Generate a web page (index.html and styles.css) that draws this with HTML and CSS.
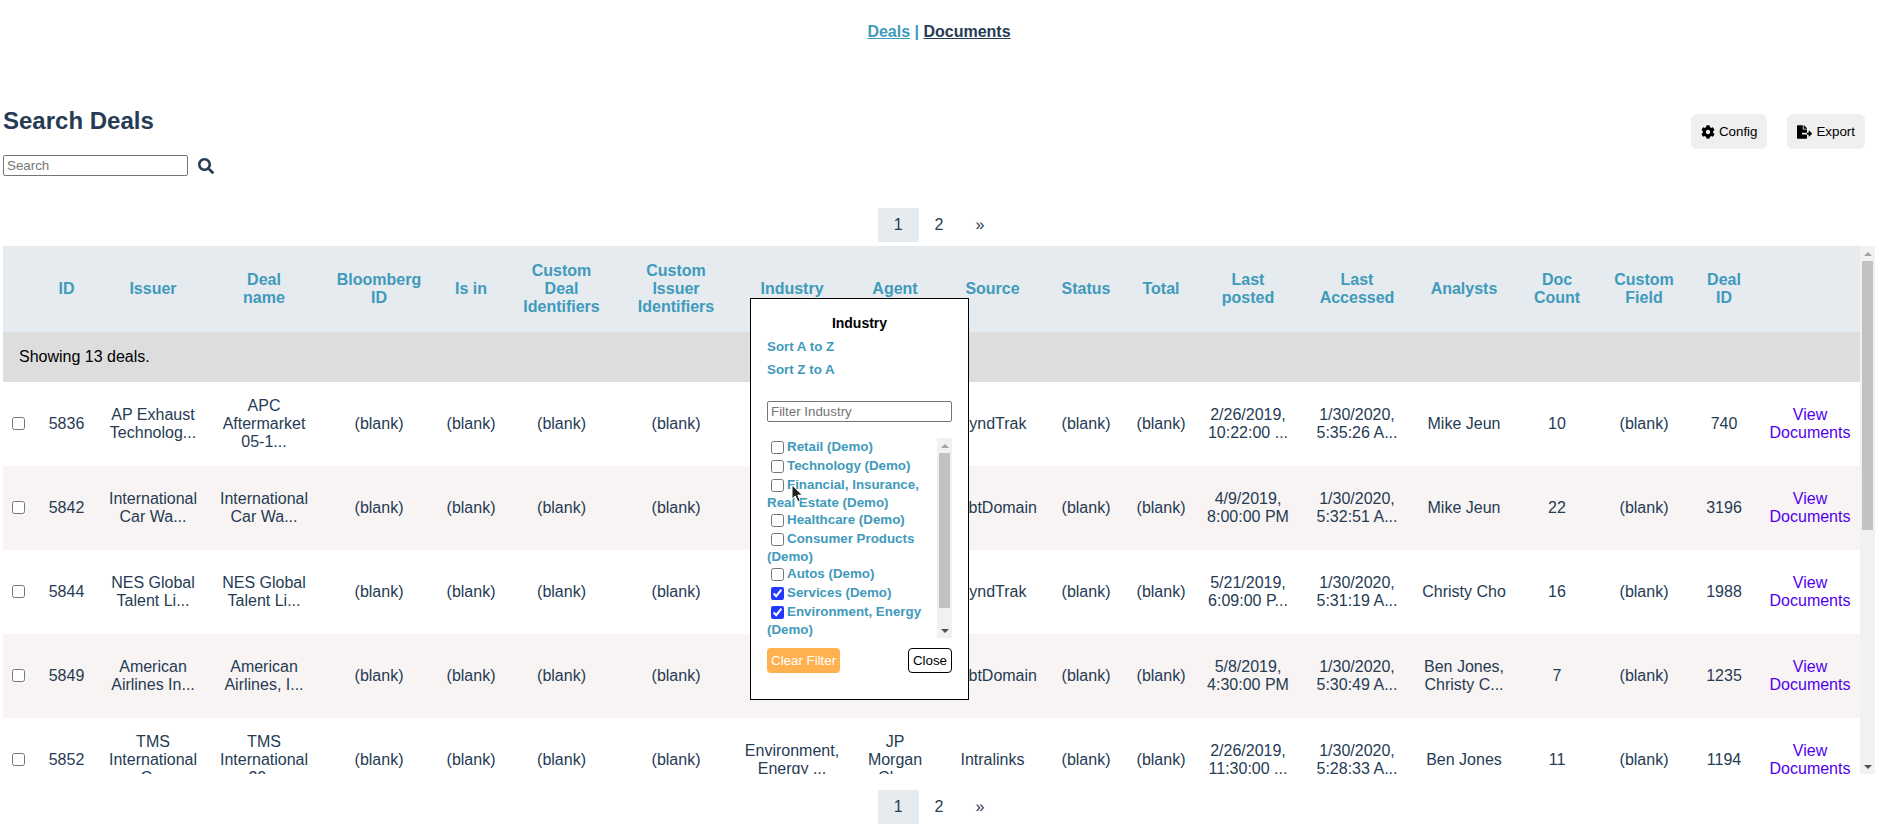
FILE: index.html
```html
<!DOCTYPE html>
<html lang="en">
<head>
<meta charset="utf-8">
<title>Search Deals</title>
<link rel="stylesheet" href="styles.css">
</head>
<body>
<nav class="top-nav"><a class="current" href="#deals">Deals</a> | <a href="#documents">Documents</a></nav>

<header class="page-head">
  <div class="search-area">
    <h1>Search Deals</h1>
    <form class="search-form">
      <input class="text-box" type="text" placeholder="Search" aria-label="Search deals">
      <button class="icon-button" type="button" aria-label="Run search"><svg width="16" height="16" viewBox="0 0 512 512" fill="currentColor"><path d="M505 442.700 405.300 343c-4.500-4.500-10.600-7-17-7H372c27.600-35.300 44-79.700 44-128C416 93.100 322.900 0 208 0S0 93.100 0 208s93.100 208 208 208c48.300 0 92.700-16.400 128-44v16.300c0 6.400 2.500 12.500 7 17l99.700 99.700c9.400 9.400 24.600 9.400 33.900 0l28.300-28.300c9.400-9.400 9.400-24.600.1-34zM208 336c-70.700 0-128-57.200-128-128 0-70.700 57.200-128 128-128 70.700 0 128 57.200 128 128 0 70.700-57.200 128-128 128z"/></svg></button>
    </form>
  </div>
  <div class="actions">
    <button class="action" type="button"><svg width="14" height="14" viewBox="0 0 512 512" fill="currentColor"><path d="M487.400 315.700l-42.600-24.600c4.300-23.200 4.300-47 0-70.200l42.600-24.600c4.900-2.800 7.100-8.600 5.500-14-11.100-35.600-30-67.800-54.700-94.600-3.800-4.100-10-5.100-14.800-2.300L380.800 110c-17.900-15.400-38.500-27.300-60.800-35.100V25.800c0-5.600-3.900-10.500-9.400-11.700-36.700-8.200-74.300-7.800-109.200 0-5.500 1.200-9.400 6.100-9.400 11.700V75c-22.200 7.900-42.800 19.800-60.800 35.100L88.700 85.500c-4.900-2.800-11-1.900-14.800 2.300-24.700 26.700-43.600 58.900-54.700 94.600-1.700 5.400.6 11.200 5.500 14L67.300 221c-4.300 23.200-4.300 47 0 70.200l-42.600 24.600c-4.900 2.800-7.100 8.600-5.500 14 11.100 35.600 30 67.800 54.700 94.600 3.800 4.100 10 5.100 14.800 2.300l42.600-24.600c17.900 15.400 38.500 27.300 60.800 35.100v49.200c0 5.600 3.900 10.500 9.400 11.700 36.700 8.200 74.300 7.800 109.200 0 5.500-1.200 9.400-6.100 9.400-11.700v-49.200c22.200-7.900 42.800-19.800 60.800-35.100l42.600 24.600c4.900 2.800 11 1.900 14.800-2.300 24.700-26.700 43.600-58.900 54.700-94.600 1.500-5.500-.7-11.300-5.600-14.100zM256 336c-44.100 0-80-35.900-80-80s35.900-80 80-80 80 35.900 80 80-35.900 80-80 80z"/></svg>Config</button>
    <button class="action" type="button"><svg width="15" height="14" viewBox="0 0 576 512" fill="currentColor"><path d="M384 121.900c0-6.300-2.500-12.400-7-16.900L279.100 7c-4.500-4.500-10.600-7-17-7H256v128h128zM571 308l-95.700-96.400c-10.100-10.100-27.400-3-27.400 11.300V288h-64v64h64v65.200c0 14.300 17.300 21.400 27.400 11.300L571 332c6.600-6.600 6.600-17.400 0-24zm-379 28v-32c0-8.800 7.200-16 16-16h176V160H248c-13.200 0-24-10.800-24-24V0H24C10.700 0 0 10.700 0 24v464c0 13.300 10.700 24 24 24h336c13.300 0 24-10.700 24-24V352H208c-8.800 0-16-7.200-16-16z"/></svg>Export</button>
  </div>
</header>

<nav class="pages" aria-label="Pages"><a class="current" href="#p1">1</a><a href="#p2">2</a><a href="#next">»</a></nav>

<main class="scroller">
  <div class="viewport">
    <table>
      <colgroup><col class="w31"><col class="w65"><col class="w108"><col class="w114"><col class="w116"><col class="w68"><col class="w113"><col class="w116"><col class="w116"><col class="w90"><col class="w105"><col class="w82"><col class="w68"><col class="w106"><col class="w112"><col class="w102"><col class="w84"><col class="w90"><col class="w70"><col class="w102"></colgroup>
      <thead>
        <tr>
          <th></th><th>ID</th><th>Issuer</th><th>Deal<br>name</th><th>Bloomberg<br>ID</th><th>Is in</th><th>Custom<br>Deal<br>Identifiers</th><th>Custom<br>Issuer<br>Identifiers</th>
          <th class="has-popup">Industry
            <div class="popup">
              <h2>Industry</h2>
              <button class="sort" type="button">Sort A to Z</button>
              <button class="sort" type="button">Sort Z to A</button>
              <input class="text-box filter-box" type="text" placeholder="Filter Industry" aria-label="Filter Industry">
              <div class="options">
                <ul>
                  <li><label><input type="checkbox">Retail (Demo)</label></li>
                  <li><label><input type="checkbox">Technology (Demo)</label></li>
                  <li><label><input type="checkbox">Financial, Insurance, Real Estate (Demo)</label></li>
                  <li><label><input type="checkbox">Healthcare (Demo)</label></li>
                  <li><label><input type="checkbox">Consumer Products (Demo)</label></li>
                  <li><label><input type="checkbox">Autos (Demo)</label></li>
                  <li><label><input type="checkbox" checked>Services (Demo)</label></li>
                  <li><label><input type="checkbox" checked>Environment, Energy (Demo)</label></li>
                </ul>
                <div class="bar"><i class="up"></i><div class="track"><div class="thumb options-thumb"></div></div><i class="down"></i></div>
              </div>
              <div class="popup-foot">
                <button class="clear" type="button">Clear Filter</button>
                <button class="close" type="button">Close</button>
              </div>
              <svg class="pointer" width="13" height="20" viewBox="0 0 13 20"><path d="M1 1v14l3.300-3 2.500 5.700 2.500-1.100-2.500-5.500H11.500z" fill="#222" stroke="#fff" stroke-width="1"/></svg>
            </div>
          </th>
          <th>Agent</th><th>Source</th><th>Status</th><th>Total</th><th>Last<br>posted</th><th>Last<br>Accessed</th><th>Analysts</th><th>Doc<br>Count</th><th>Custom<br>Field</th><th>Deal<br>ID</th><th></th>
        </tr>
      </thead>
      <tbody>
        <tr class="summary"><td colspan="20">Showing 13 deals.</td></tr>
        <tr><td><input type="checkbox" aria-label="Select 5836"></td><td>5836</td><td>AP Exhaust<br>Technolog...</td><td>APC<br>Aftermarket<br>05-1...</td><td>(blank)</td><td>(blank)</td><td>(blank)</td><td>(blank)</td><td></td><td></td><td>SyndTrak</td><td>(blank)</td><td>(blank)</td><td>2/26/2019,<br>10:22:00 ...</td><td>1/30/2020,<br>5:35:26 A...</td><td>Mike Jeun</td><td>10</td><td>(blank)</td><td>740</td><td><a href="#d5836">View<br>Documents</a></td></tr>
        <tr class="tinted"><td><input type="checkbox" aria-label="Select 5842"></td><td>5842</td><td>International<br>Car Wa...</td><td>International<br>Car Wa...</td><td>(blank)</td><td>(blank)</td><td>(blank)</td><td>(blank)</td><td></td><td></td><td>DebtDomain</td><td>(blank)</td><td>(blank)</td><td>4/9/2019,<br>8:00:00 PM</td><td>1/30/2020,<br>5:32:51 A...</td><td>Mike Jeun</td><td>22</td><td>(blank)</td><td>3196</td><td><a href="#d5842">View<br>Documents</a></td></tr>
        <tr><td><input type="checkbox" aria-label="Select 5844"></td><td>5844</td><td>NES Global<br>Talent Li...</td><td>NES Global<br>Talent Li...</td><td>(blank)</td><td>(blank)</td><td>(blank)</td><td>(blank)</td><td></td><td></td><td>SyndTrak</td><td>(blank)</td><td>(blank)</td><td>5/21/2019,<br>6:09:00 P...</td><td>1/30/2020,<br>5:31:19 A...</td><td>Christy Cho</td><td>16</td><td>(blank)</td><td>1988</td><td><a href="#d5844">View<br>Documents</a></td></tr>
        <tr class="tinted"><td><input type="checkbox" aria-label="Select 5849"></td><td>5849</td><td>American<br>Airlines In...</td><td>American<br>Airlines, I...</td><td>(blank)</td><td>(blank)</td><td>(blank)</td><td>(blank)</td><td></td><td></td><td>DebtDomain</td><td>(blank)</td><td>(blank)</td><td>5/8/2019,<br>4:30:00 PM</td><td>1/30/2020,<br>5:30:49 A...</td><td>Ben Jones,<br>Christy C...</td><td>7</td><td>(blank)</td><td>1235</td><td><a href="#d5849">View<br>Documents</a></td></tr>
        <tr><td><input type="checkbox" aria-label="Select 5852"></td><td>5852</td><td>TMS<br>International<br>C...</td><td>TMS<br>International<br>20...</td><td>(blank)</td><td>(blank)</td><td>(blank)</td><td>(blank)</td><td>Environment,<br>Energy ...</td><td>JP<br>Morgan<br>Ch...</td><td>Intralinks</td><td>(blank)</td><td>(blank)</td><td>2/26/2019,<br>11:30:00 ...</td><td>1/30/2020,<br>5:28:33 A...</td><td>Ben Jones</td><td>11</td><td>(blank)</td><td>1194</td><td><a href="#d5852">View<br>Documents</a></td></tr>
      </tbody>
    </table>
  </div>
  <div class="bar"><i class="up"></i><div class="track"><div class="thumb table-thumb"></div></div><i class="down"></i></div>
</main>

<nav class="pages bottom" aria-label="Pages, bottom"><a class="current" href="#p1">1</a><a href="#p2">2</a><a href="#next">»</a></nav>
</body>
</html>
```

FILE: styles.css
```css
* { box-sizing: border-box; }

body {
  margin: 0;
  padding: 0 12px 0 3px;
  font: 16px/18px "Liberation Sans", Arial, sans-serif;
  color: #263b54;
  background: #fff;
  overflow: hidden;
}

button, input { font-family: inherit; font-size: smaller; }
button { cursor: pointer; }

.top-nav {
  padding: 23px 0 29px;
  text-align: center;
  font-weight: bold;
}
.top-nav a { color: inherit; }
.top-nav, .top-nav .current { color: #3f9abb; }
.top-nav a:not(.current) { color: #263b54; }

.page-head {
  display: flex;
  justify-content: space-between;
  padding-top: 36px;
}
h1 { margin: 0 0 20px; font-size: 24px; line-height: 29px; }
.search-form { display: flex; align-items: center; gap: 10px; height: 21px; }
.text-box {
  width: 185px;
  height: 21px;
  padding: 1px 3px;
  border: 1px solid #767676;
  border-radius: 2px;
  background: #fff;
}
.text-box::placeholder { color: #757575; }
.icon-button {
  display: flex;
  padding: 0;
  border: 0;
  background: none;
  color: #263b54;
}
.actions { display: flex; align-items: flex-start; gap: 20px; padding: 8px 10px 0 0; }
.action {
  display: flex;
  align-items: center;
  gap: 4px;
  height: 35px;
  padding: 0 10px;
  border: 0;
  border-radius: 6px;
  background: #efefef;
  color: #000;
}

.pages { display: flex; justify-content: center; margin: 32px 0 4px; }
.pages.bottom { margin: 16px 0 0; }
.pages a { padding: 8px 16px; color: inherit; text-decoration: none; }
.pages .current { background: #e6ebef; }

.scroller { display: flex; height: 64vh; }
.viewport { flex: 1; min-width: 0; overflow: hidden; }

table { width: 100%; table-layout: fixed; border-collapse: collapse; }
th, td { padding: 0; text-align: center; }
th { height: 86px; background: #e6ebef; color: #3f9abb; }
td { height: 84px; }
td a { color: #5000f0; text-decoration: none; }
td input { display: block; margin: 0 auto 2px; }
.tinted { background: #f8f4f3; }
.summary td { height: 50px; padding-left: 16px; text-align: left; background: #ddd; color: #000; }

.w31 { width: 31px; }
.w65 { width: 65px; }
.w68 { width: 68px; }
.w70 { width: 70px; }
.w82 { width: 82px; }
.w84 { width: 84px; }
.w90 { width: 90px; }
.w102 { width: 102px; }
.w105 { width: 105px; }
.w106 { width: 106px; }
.w108 { width: 108px; }
.w112 { width: 112px; }
.w113 { width: 113px; }
.w114 { width: 114px; }
.w116 { width: 116px; }

.bar { display: flex; flex-direction: column; width: 15px; background: #f1f1f1; }
.track { flex: 1; padding: 0 2px; }
.thumb { background: #c1c1c1; }
.table-thumb { height: 54%; }
.options-thumb { height: 91%; }
.up, .down { display: flex; align-items: center; justify-content: center; height: 15px; }
.up::before, .down::before { content: ""; border: 4px solid transparent; }
.up::before { border-top: 0; border-bottom-color: #a3a3a3; }
.down::before { border-bottom: 0; border-top-color: #505050; }

.has-popup { position: relative; }
.popup {
  position: absolute;
  top: 52px;
  left: 16px;
  width: 219px;
  height: 402px;
  padding: 15px 16px 0;
  border: 1px solid #000;
  background: #fff;
  text-align: left;
}
.popup h2 { margin: 0 0 3px; font-size: 14px; line-height: 18px; text-align: center; color: #000; }
.sort {
  display: block;
  height: 23px;
  padding: 0;
  border: 0;
  background: none;
  font-weight: bold;
  color: #3f9abb;
}
.filter-box { display: block; margin: 20px 0 16px; }
.options { display: flex; height: 200px; }
.options ul { flex: 1; margin: 0; padding: 0; list-style: none; font-size: smaller; line-height: 16px; }
.options input { width: 13px; height: 13px; margin: 3px 3px 3px 4px; vertical-align: middle; accent-color: #2339ff; }
.popup-foot { display: flex; justify-content: space-between; padding-top: 10px; }
.popup-foot button { height: 25px; padding: 0 4px; border-radius: 4px; }
.popup-foot .clear { border: 0; background: #ffb14f; color: #fff; }
.popup-foot .close { border: 1px solid #000; background: #fff; color: #000; }
.pointer { position: absolute; top: 185px; left: 40px; }
```
